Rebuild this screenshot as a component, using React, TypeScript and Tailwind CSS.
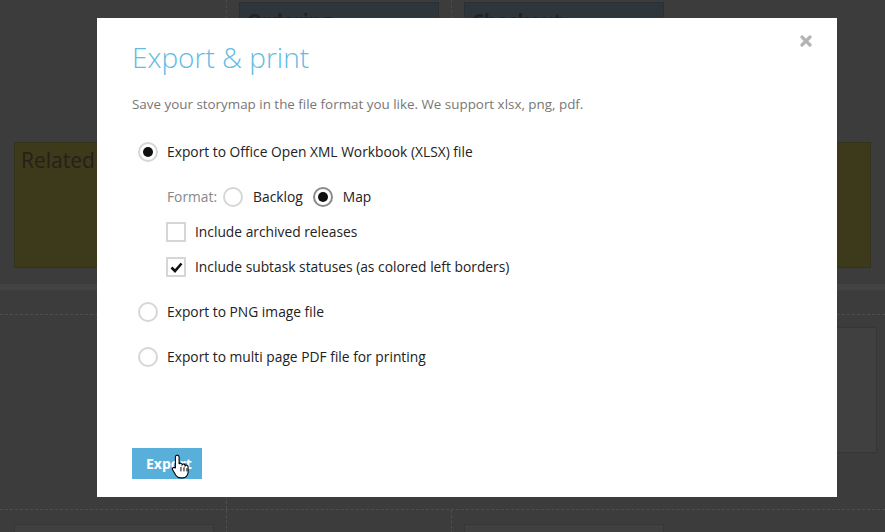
function Radio({ checked, focus }: { checked?: boolean; focus?: boolean }) {
    return (
        <span
            className={`flex h-[20px] w-[20px] shrink-0 items-center justify-center rounded-full border-2 ${focus ? 'border-[#8a8a8a]' : 'border-[#d6d6d6]'}`}
        >
            {checked && <span className="h-[10px] w-[10px] rounded-full bg-[#111]" />}
        </span>
    );
}

function Checkbox({ checked }: { checked?: boolean }) {
    return (
        <span className="flex h-[20px] w-[20px] shrink-0 items-center justify-center border-2 border-[#d6d6d6]">
            {checked && (
                <svg width="13" height="11" viewBox="0 0 13 11">
                    <path d="M1.5 5.5 L5 9 L11.5 1.5" fill="none" stroke="#111" strokeWidth="2.6" />
                </svg>
            )}
        </span>
    );
}

function CloseIcon() {
    return (
        <svg width="12" height="12" viewBox="0 0 12 12">
            <path d="M2 2 L10 10 M10 2 L2 10" stroke="#b3b3b3" strokeWidth="3.2" strokeLinecap="round" />
        </svg>
    );
}

function HandCursor() {
    return (
        <svg width="19" height="25" viewBox="0 0 17 23" className="pointer-events-none absolute left-[39px] top-[6px]">
            <path
                d="M5.5 1 C6.6 1 7.2 1.8 7.2 2.8 V9.2 C7.5 8.6 8.2 8.3 8.9 8.5 C9.6 8.7 10 9.3 10 9.9 C10.3 9.4 11 9.1 11.7 9.3 C12.4 9.5 12.8 10.1 12.8 10.8 C13.1 10.3 13.8 10.1 14.5 10.3 C15.2 10.6 15.5 11.2 15.5 11.9 V16.5 C15.5 19.5 13.5 22 10.5 22 H8.5 C6.5 22 5.2 21 4.2 19.5 L1.2 14.5 C0.8 13.8 1 13 1.7 12.6 C2.4 12.2 3.2 12.4 3.7 13 L3.8 13.2 V2.8 C3.8 1.8 4.4 1 5.5 1 Z"
                fill="#fff"
                stroke="#000"
                strokeWidth="1"
            />
            <path d="M8.9 12 V16 M11.7 12.3 V16 M14.4 13 V16" stroke="#000" strokeWidth="0.9" />
        </svg>
    );
}

function BgCard({ title }: { title: string }) {
    return (
        <div className="h-[40px] w-[200px] overflow-hidden border border-[#2a3034] bg-[#2f363b] px-[7px] pt-[4px] text-[19px] font-bold text-[#1e2427]">
            {title}
        </div>
    );
}

export default function App() {
    return (
        <div className="relative h-[532px] w-[885px] overflow-hidden bg-[#3c3c3c]" style={{ fontFamily: '"Open Sans", sans-serif' }}>
            {/* page behind the overlay */}
            <div className="flex h-[130px] pl-[2px]">
                <div className="w-[225px] border-r border-dashed border-[#4a4a4a]" />
                <div className="w-[225px] border-r border-dashed border-[#4a4a4a] pl-[12px] pt-[2px]">
                    <BgCard title="Ordering" />
                </div>
                <div className="w-[225px] pl-[12px] pt-[2px]">
                    <BgCard title="Checkout" />
                </div>
            </div>
            <div className="mx-[14px] mt-[12px] h-[126px] border border-[#34321a] bg-[#3d3a1b] px-[6px] pt-[2px] text-[21px] text-[#22211a]">
                Related items
            </div>
            <div className="mt-[16px] h-[6px] bg-[#434343]" />
            <div className="mt-[24px] flex h-[195px] border-t border-dashed border-[#4e4e4e]">
                <div className="w-[227px] border-r border-dashed border-[#4e4e4e]" />
                <div className="flex flex-1 justify-end pr-[8px] pt-[12px]">
                    <div className="h-[126px] w-[200px] border border-[#363636] bg-[#404040] px-[7px] pt-[4px] text-[20px] font-bold text-[#222]">
                        Delivery
                    </div>
                </div>
            </div>
            <div className="flex h-[30px] border-t border-dashed border-[#4e4e4e]">
                <div className="w-[227px] border-r border-dashed border-[#4e4e4e] pl-[14px] pt-[14px]">
                    <div className="h-[20px] w-[200px] border border-[#363636] bg-[#404040]" />
                </div>
                <div className="w-[225px] border-r border-dashed border-[#4e4e4e]" />
                <div className="pl-[12px] pt-[14px]">
                    <div className="h-[20px] w-[200px] border border-[#363636] bg-[#404040]" />
                </div>
            </div>

            {/* modal */}
            <div className="absolute left-[97px] top-[18px] flex h-[479px] w-[740px] flex-col bg-white px-[35px] pt-[19px]">
                <button className="absolute right-[25px] top-[17px]">
                    <CloseIcon />
                </button>
                <h2 className="text-[28px] font-light leading-[40px] text-[#62bbe5]">Export &amp; print</h2>
                <p className="mt-[17px] text-[13.4px] leading-[20px] text-[#777]">
                    Save your storymap in the file format you like. We support xlsx, png, pdf.
                </p>

                <div className="mt-[28px] flex flex-col text-[13.8px] leading-[20px] text-[#222]">
                    <label className="flex items-center gap-[9px] pl-[6px]">
                        <Radio checked />
                        <span>Export to Office Open XML Workbook (XLSX) file</span>
                    </label>

                    <div className="mt-[25px] flex items-center pl-[35px]">
                        <span className="mr-[6px] text-[#888]">Format:</span>
                        <Radio />
                        <span className="ml-[10px] mr-[10px]">Backlog</span>
                        <Radio checked focus />
                        <span className="ml-[10px]">Map</span>
                    </div>

                    <label className="mt-[15px] flex items-center gap-[9px] pl-[34px]">
                        <Checkbox />
                        <span>Include archived releases</span>
                    </label>
                    <label className="mt-[15px] flex items-center gap-[9px] pl-[34px]">
                        <Checkbox checked />
                        <span>Include subtask statuses (as colored left borders)</span>
                    </label>

                    <label className="mt-[25px] flex items-center gap-[9px] pl-[6px]">
                        <Radio />
                        <span>Export to PNG image file</span>
                    </label>
                    <label className="mt-[25px] flex items-center gap-[9px] pl-[6px]">
                        <Radio />
                        <span>Export to multi page PDF file for printing</span>
                    </label>
                </div>

                <div className="mt-auto mb-[18px]">
                    <button className="relative h-[31px] w-[70px] bg-[#58afd9] pl-[14px] text-left text-[14px] font-bold text-white">
                        Export
                        <HandCursor />
                    </button>
                </div>
            </div>
        </div>
    );
}
